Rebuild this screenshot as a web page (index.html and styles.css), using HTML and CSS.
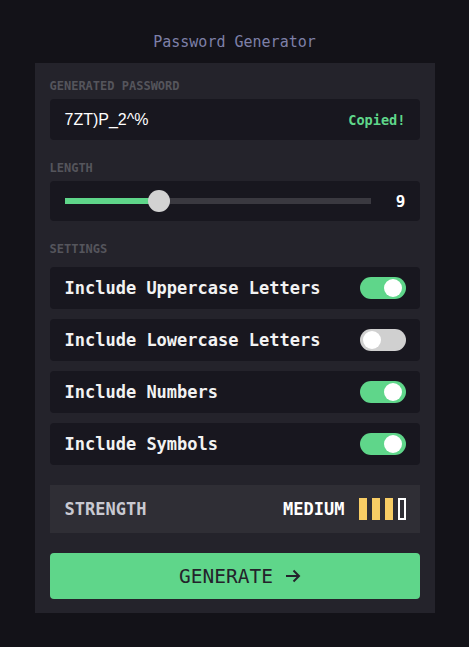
FILE: index.html
```html
<!DOCTYPE html>
<html>
<head>
<meta charset="utf-8">
<link rel="stylesheet" href="styles.css">
</head>
<body>
<main class="app">
  <h1 class="title">Password Generator</h1>
  <section class="card">
    <div class="label">GENERATED PASSWORD</div>
    <div class="field output">
      <span class="pw">7ZT)P_2^%</span>
      <span class="copied">Copied!</span>
    </div>

    <div class="label spaced">LENGTH</div>
    <div class="field slider">
      <div class="track">
        <div class="fill" style="width: 31%"></div>
        <div class="thumb" style="left: 31%"></div>
      </div>
      <span class="value">9</span>
    </div>

    <div class="label spaced settings-label">SETTINGS</div>
    <div class="options">
      <div class="field option"><span>Include Uppercase Letters</span><span class="toggle on"></span></div>
      <div class="field option"><span>Include Lowercase Letters</span><span class="toggle"></span></div>
      <div class="field option"><span>Include Numbers</span><span class="toggle on"></span></div>
      <div class="field option"><span>Include Symbols</span><span class="toggle on"></span></div>
    </div>

    <div class="strength">
      <span class="s-label">STRENGTH</span>
      <div class="s-right">
        <span class="s-value">MEDIUM</span>
        <div class="bars">
          <span class="bar full"></span>
          <span class="bar full"></span>
          <span class="bar full"></span>
          <span class="bar"></span>
        </div>
      </div>
    </div>

    <button class="generate">GENERATE<svg class="arrow" width="16" height="14" viewBox="0 0 16 14" fill="none" stroke="currentColor" stroke-width="2"><path d="M1 7h13M8.5 1.5L14 7l-5.5 5.5"/></svg></button>
  </section>
</main>
</body>
</html>
```

FILE: styles.css
```css
* { box-sizing: border-box; }
html, body {
  margin: 0;
  background: #131218;
  font-family: "DejaVu Sans Mono", "Liberation Mono", monospace;
}
.app {
  width: 400px;
  margin: 0 auto;
  padding-top: 33px;
}
.title {
  margin: 0 0 12px;
  text-align: center;
  font-size: 15px;
  line-height: 18px;
  font-weight: normal;
  color: #7e80a8;
}
.card {
  background: #24232b;
  padding: 15px 15px 14px;
}
.label {
  font-size: 12px;
  line-height: 16px;
  font-weight: bold;
  color: #55555c;
  margin-bottom: 5px;
}
.label.spaced { margin-top: 20px; }
.settings-label { margin-bottom: 10px; }
.field {
  background: #18171f;
  border-radius: 4px;
  display: flex;
  align-items: center;
  padding: 0 14px 0 15px;
}
.output { height: 41px; justify-content: space-between; }
.pw {
  font-family: "Liberation Sans", Arial, sans-serif;
  font-size: 16px;
  color: #ffffff;
}
.copied {
  font-size: 13.6px;
  font-weight: bold;
  color: #5fd68a;
}
.slider { height: 40px; }
.track {
  flex: 1;
  position: relative;
  height: 6px;
  background: #3a3940;
}
.fill {
  height: 100%;
  background: #5fd68a;
}
.thumb {
  position: absolute;
  top: 50%;
  width: 22px;
  height: 22px;
  margin: -11px 0 0 -11px;
  border-radius: 50%;
  background: #d2d2d2;
}
.value {
  width: 35px;
  text-align: right;
  font-size: 16px;
  font-weight: bold;
  color: #fff;
}
.options {
  display: flex;
  flex-direction: column;
  gap: 10px;
}
.option {
  height: 42px;
  justify-content: space-between;
  font-size: 17px;
  font-weight: bold;
  color: #f2f2f2;
}
.toggle {
  position: relative;
  width: 46px;
  height: 22px;
  border-radius: 11px;
  background: #d0d0d0;
}
.toggle::after {
  content: "";
  position: absolute;
  top: 2px;
  left: 3px;
  width: 18px;
  height: 18px;
  border-radius: 50%;
  background: #fff;
}
.toggle.on { background: #5fd68a; }
.toggle.on::after { left: auto; right: 4px; }
.strength {
  margin-top: 20px;
  height: 48px;
  background: #2f2e35;
  display: flex;
  align-items: center;
  justify-content: space-between;
  padding: 0 14px 0 15px;
  font-size: 17px;
  font-weight: bold;
}
.s-label { color: #c9c9d1; }
.s-right { display: flex; align-items: center; gap: 14px; }
.s-value { color: #fff; }
.bars { display: flex; gap: 5px; }
.bar {
  width: 8px;
  height: 22px;
  border: 2px solid #fff;
}
.bar.full { background: #f8cd65; border-color: #f8cd65; }
.generate {
  margin-top: 20px;
  width: 100%;
  height: 46px;
  border: 0;
  border-radius: 4px;
  background: #5fd68a;
  color: #24232b;
  font-family: "DejaVu Sans Mono", monospace;
  font-size: 19.5px;
  display: flex;
  align-items: center;
  justify-content: center;
  gap: 12px;
  padding: 0 0 0 11px;
  cursor: pointer;
}
.arrow { display: block; }
```
